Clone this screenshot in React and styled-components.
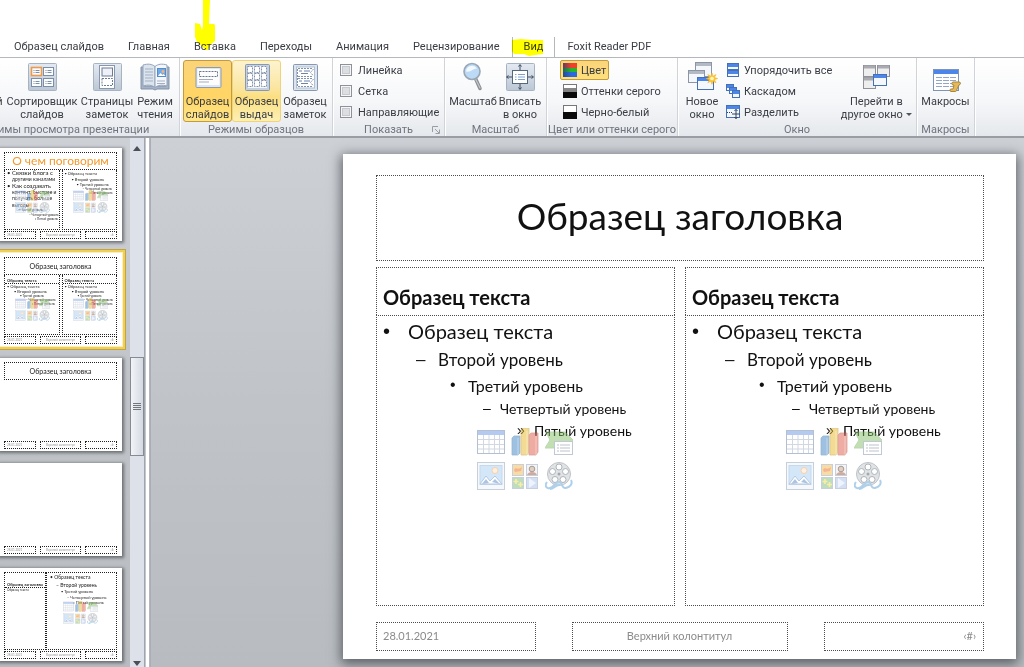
import React from "react";
import styled, { createGlobalStyle, css } from "styled-components";

const UI = `Roboto, "Noto Sans", sans-serif`;
const SLIDE = `Lato, "Open Sans", sans-serif`;

const Global = createGlobalStyle`
  *, *::before, *::after { box-sizing: border-box; }
  body { margin: 0; background: #fff; font-family: ${UI}; font-size: 11px; color: #3a3d44; }
  button { font: inherit; color: inherit; border: 0; background: none; padding: 0; margin: 0; }
  h1, h2, h3, ul, p { margin: 0; padding: 0; font-weight: normal; }
  ul { list-style: none; }
  svg { display: block; flex: none; }
`;

/* ---------- window ---------- */
const Window = styled.div`
  display: flex;
  flex-direction: column;
  height: 100vh;
  min-width: 1000px;
  overflow: hidden;
`;

const TabBar = styled.nav`
  position: relative;
  flex: none;
  display: flex;
  align-items: flex-end;
  height: 58px;
  padding-left: 2px;
  border-bottom: 1px solid #b4b7bb;
  overflow: hidden;
`;

const Tab = styled.button`
  flex: none;
  height: 20px;
  padding: 0 12px;
  line-height: 20px;
  white-space: nowrap;
  ${(p) =>
    p.$active &&
    css`
      padding: 0 11px;
      border: 1px solid #b4b7bb;
      border-width: 0 1px;
    `}
`;

const Marker = styled.svg`
  position: absolute;
  left: ${(p) => p.$x}px;
  top: ${(p) => p.$y}px;
  mix-blend-mode: multiply;
  pointer-events: none;
`;

/* ---------- ribbon ---------- */
const Ribbon = styled.div`
  flex: none;
  display: flex;
  height: 80px;
  background: linear-gradient(#ffffff, #f6f7f9 55%, #e5e8ec);
  border-bottom: 2px solid #9a9ea4;
`;

const GroupBox = styled.section`
  flex: none;
  width: ${(p) => p.$w}px;
  margin-left: ${(p) => (p.$cut ? -p.$cut : 0)}px;
  display: flex;
  flex-direction: column;
  border-right: 1px solid #d0d3d8;
  box-shadow: 1px 0 0 #fff;
`;

const GroupBody = styled.div`
  display: flex;
  align-items: flex-start;
  justify-content: ${(p) => p.$justify || "flex-start"};
  gap: ${(p) => p.$gap || 0}px;
  height: 66px;
  padding: 2px ${(p) => p.$pad ?? 3}px 0;
`;

const GroupLabel = styled.h2`
  display: flex;
  align-items: center;
  justify-content: center;
  position: relative;
  font-size: 11px;
  line-height: 12px;
  color: #70747e;
  white-space: nowrap;
`;

const Launcher = styled.button`
  position: absolute;
  right: 4px;
  top: 2px;
`;

const BigButton = styled.button`
  flex: none;
  display: flex;
  flex-direction: column;
  align-items: center;
  width: ${(p) => p.$w}px;
  height: 62px;
  line-height: 13px;
  white-space: nowrap;
  border: 1px solid transparent;
  border-radius: 3px;
  svg { margin-bottom: 2px; }
  ${(p) =>
    p.$state === "on" &&
    css`
      background: linear-gradient(#fbd47a, #ffd564 60%, #ffe68a);
      border-color: #c29b3c;
    `}
  ${(p) =>
    p.$state === "hover" &&
    css`
      background: linear-gradient(#fdf3cf, #fbe6a0 45%, #fbdf80 60%, #fdf0b4);
      border-color: #f0d27a;
    `}
`;

const Stack = styled.div`
  display: flex;
  flex-direction: column;
  align-items: flex-start;
`;

const SmallButton = styled.button`
  display: flex;
  align-items: center;
  gap: 4px;
  height: 20px;
  margin-bottom: 1px;
  padding: 0 2px;
  white-space: nowrap;
  border: 1px solid transparent;
  border-radius: 2px;
  ${(p) =>
    p.$on &&
    css`
      background: linear-gradient(#fbd47a, #ffe07c);
      border-color: #c29b3c;
    `}
`;

const CheckRow = styled.label`
  display: flex;
  align-items: center;
  gap: 6px;
  height: 20px;
  margin-bottom: 1px;
  white-space: nowrap;
`;

const Check = styled.input`
  appearance: none;
  width: 12px;
  height: 12px;
  margin: 0;
  border: 1px solid #8e9197;
  background: #dcdee1;
  box-shadow: inset 0 0 0 1px #f6f6f7, inset 0 0 0 2px #c6c9ce;
`;

const Divider = styled.div`
  width: 1px;
  height: 58px;
  margin: 0 4px 0 auto;
  background: linear-gradient(#f4f5f7, #c9ccd1 50%, #f0f1f4);
`;

const Caret = styled.span`
  display: inline-block;
  margin-left: 3px;
  vertical-align: 2px;
  border: 3px solid transparent;
  border-top-color: #50545c;
  border-bottom: 0;
`;

/* ---------- work area ---------- */
const Work = styled.div`
  flex: 1;
  min-height: 0;
  display: flex;
  background: linear-gradient(#cdd0d5, #c0c4c8 50%, #b8bcc0);
`;

const Rail = styled.aside`
  flex: none;
  width: 130px;
  padding-top: 10px;
  display: flex;
  flex-direction: column;
  gap: 12px;
  overflow: hidden;
`;

const Scroll = styled.div`
  flex: none;
  width: 15px;
  display: flex;
  flex-direction: column;
  background: #dce1ea;
  border-right: 1px solid #a0a5ad;
`;

const ScrollArrow = styled.button`
  height: ${(p) => p.$h}px;
  display: grid;
  place-items: center;
`;

const ScrollGap = styled.div`
  flex: ${(p) => p.$n};
`;

const ScrollThumb = styled.div`
  height: 99px;
  display: grid;
  place-content: center;
  gap: 1px;
  background: linear-gradient(90deg, #f2f4f7, #d4d9e2);
  border: 1px solid #858a93;
`;

const Grip = styled.i`
  width: 8px;
  height: 1px;
  background: #71757d;
`;

const Splitter = styled.div`
  flex: none;
  width: 6px;
  border: solid #a9adb4;
  border-width: 0 1px 0 0;
  background: linear-gradient(90deg, #c3c7cd 1px, #fff 1px 4px, #b4b8be 4px);
`;

const Canvas = styled.main`
  flex: 1;
  padding: 16px 8px 8px 192px;
`;

const dots = "1px dotted #4c4c4c";

const Slide = styled.article`
  display: flex;
  flex-direction: column;
  height: 505px;
  padding: 21px 32px 7px 33px;
  background: #fff;
  color: #111;
  font-family: ${SLIDE};
  box-shadow: 0 3px 11px 2px rgba(60, 65, 72, 0.75);
`;

const TitleBox = styled.h1`
  height: 86px;
  display: grid;
  place-items: center;
  padding-bottom: 6px;
  border: ${dots};
  font-size: 37px;
`;

const Columns = styled.div`
  display: grid;
  grid-template-columns: 1fr 1fr;
  gap: 10px;
  margin-top: 6px;
`;

const Heading = styled.h3`
  height: 48px;
  padding: 17px 6px 0;
  border: ${dots};
  border-bottom: 0;
  font-size: 20px;
  line-height: 24px;
  font-weight: bold;
`;

const Body = styled.div`
  position: relative;
  height: 291px;
  border: ${dots};
`;

const Level = styled.li`
  display: flex;
  align-items: center;
  height: ${(p) => p.$h}px;
  padding-left: ${(p) => p.$indent}px;
  font-size: ${(p) => p.$size}px;
  white-space: nowrap;
`;

const Bullet = styled.span`
  flex: none;
  width: ${(p) => p.$w}px;
  font-family: "Liberation Sans", sans-serif;
`;

const InsertGrid = styled.div`
  position: absolute;
  inset: 0;
  display: grid;
  grid-template-columns: repeat(3, 28px);
  place-content: center;
  gap: 6px;
  padding: 0 2px 4px 0;
  opacity: 0.5;
`;

const Footer = styled.footer`
  display: grid;
  grid-template-columns: 160fr 216fr 160fr;
  gap: 36px;
  margin-top: 16px;
`;

const FootBox = styled.p`
  height: 29px;
  padding: 0 7px 0 6px;
  border: ${dots};
  font-size: 11px;
  line-height: 25px;
  color: #8b8b8b;
  text-align: ${(p) => p.$align};
`;

/* ---------- thumbnails ---------- */
const Thumb = styled.article`
  flex: none;
  width: 124px;
  height: 93px;
  margin-left: -2px;
  padding: 4px 5px 2px 6px;
  display: flex;
  flex-direction: column;
  background: #fff;
  color: #222;
  font-family: ${SLIDE};
  box-shadow: ${(p) =>
    p.$selected
      ? "0 0 0 1px #f9efc0, 0 0 0 3px #f0cf55, 0 0 0 4px #c2a345"
      : "1px 1px 3px 1px rgba(50, 55, 62, 0.6)"};
`;

const tdash = "1px dotted #222";

const ThumbTitle = styled.h3`
  flex: none;
  height: 18px;
  border: ${tdash};
  text-align: center;
  font-size: ${(p) => (p.$big ? 12 : 7)}px;
  line-height: 16px;
  color: ${(p) => (p.$big ? "#f39a2b" : "#222")};
  white-space: nowrap;
`;

const ThumbCols = styled.div`
  flex: 1;
  min-height: 0;
  display: grid;
  grid-template-columns: ${(p) => p.$cols || "1fr 1fr"};
  gap: ${(p) => p.$gap ?? 2}px;
`;

const ThumbCell = styled.div`
  position: relative;
  min-width: 0;
  border: ${tdash};
  border-top-width: ${(p) => (p.$open ? 0 : 1)}px;
`;

const ThumbHead = styled.p`
  height: ${(p) => p.$h}px;
  display: flex;
  align-items: flex-end;
  padding-left: 2px;
  border-bottom: ${tdash};
  font-size: 4px;
  line-height: 5px;
  font-weight: bold;
  white-space: nowrap;
`;

const ThumbLine = styled.li`
  padding-left: ${(p) => p.$in}px;
  font-size: ${(p) => p.$s}px;
  line-height: ${(p) => p.$lh}px;
  white-space: nowrap;
`;

const ThumbIcons = styled.div`
  position: absolute;
  left: ${(p) => p.$x}px;
  top: ${(p) => p.$y}px;
  display: grid;
  grid-template-columns: repeat(3, 11px);
  gap: 1px;
  opacity: 0.5;
`;

const ThumbFoot = styled.footer`
  flex: none;
  display: grid;
  grid-template-columns: 32fr 40fr 32fr;
  gap: 4px;
  margin-top: ${(p) => (p.$push ? "auto" : "1px")};
`;

const ThumbFootBox = styled.p`
  height: 8px;
  padding: 0 2px;
  border: ${tdash};
  font-size: 3px;
  line-height: 6px;
  color: #999;
  text-align: ${(p) => p.$align};
`;

/* ---------- icons ---------- */
const Tile = ({ children, w = 28, h = 28 }) => (
  <svg width="32" height="32" viewBox="0 0 32 32" fill="none">
    <defs>
      <linearGradient id="tile" x1="0" y1="0" x2="0" y2="1">
        <stop offset="0" stopColor="#e4eaf2" />
        <stop offset="1" stopColor="#bcc7d5" />
      </linearGradient>
    </defs>
    <rect x={(32 - w) / 2 + 0.5} y={(32 - h) / 2 + 0.5} width={w} height={h - 1} rx="1" fill="url(#tile)" stroke="#a8b3c2" />
    {children}
  </svg>
);

const MiniSlide = ({ x, y, hot }) => (
  <g>
    <rect x={x} y={y} width="10" height="8" fill="#fbfcfe" stroke={hot ? "#ee9a48" : "#7b8da7"} strokeWidth={hot ? 1.6 : 1} />
    <path d={`M${x + 2} ${y + 3}h1M${x + 4} ${y + 3}h4M${x + 2} ${y + 5}h1M${x + 4} ${y + 5}h4`} stroke="#7c8ea8" />
  </g>
);

const SorterIcon = () => (
  <Tile>
    <MiniSlide x={5.5} y={6.5} hot />
    <MiniSlide x={17.5} y={6.5} />
    <MiniSlide x={5.5} y={17.5} />
    <MiniSlide x={17.5} y={17.5} />
  </Tile>
);

const NotesPageIcon = () => (
  <Tile>
    <rect x="8.500" y="4.500" width="15" height="23" fill="#fff" stroke="#8796ac" />
    <rect x="11" y="7" width="10.500" height="8" fill="#eef2f8" stroke="#6b7b93" />
    <path d="M11 17.500h10.500v7h-10.500z" stroke="#6b7b93" strokeDasharray="2 1" />
  </Tile>
);

const ReadIcon = () => (
  <svg width="32" height="32" viewBox="0 0 32 32" fill="none">
    <path d="M2 6h3v19h22v-19h3v22h-12l-2 1-2-1h-12z" fill="#a5b3c6" stroke="#8394aa" />
    <path d="M4 4c5-1.500 9-1 12 1.500v21c-3-2.500-7-3-12-1.500z" fill="#dce4ee" stroke="#94a4ba" />
    <path d="M28 4c-5-1.500-9-1-12 1.500v21c3-2.500 7-3 12-1.500z" fill="#f3f6fa" stroke="#94a4ba" />
    <path d="M6 8h8M6 11h8M6 14h8M6 17h8M6 20h8M18 20h8M18 22.500h8" stroke="#a3b1c5" />
    <rect x="18.500" y="7.500" width="8" height="8" fill="#6fabec" stroke="#5a8ac4" />
    <circle cx="24" cy="10.500" r="1.500" fill="#f7b36b" />
    <path d="M19 15l2.500-3 2 2 1-1 2 2z" fill="#fff" />
  </svg>
);

const SlideMasterIcon = () => (
  <svg width="32" height="32" viewBox="0 0 32 32" fill="none">
    <rect x="4" y="6.500" width="25" height="20" rx="1" fill="#dfe6ef" stroke="#8b9bb3" />
    <rect x="5.500" y="8" width="22" height="16" fill="#fdfdfe" />
    <rect x="7.500" y="10.500" width="18" height="5" stroke="#66768f" strokeDasharray="2 1" />
    <path d="M7 18.500h14M7 21h10" stroke="#a3aebf" />
  </svg>
);

const HandoutIcon = () => (
  <svg width="32" height="32" viewBox="0 0 32 32" fill="none">
    <rect x="4.500" y="3.500" width="24" height="26" rx="1" fill="#c5d1e0" stroke="#8798b0" />
    <rect x="7" y="5" width="19" height="22" fill="#f4f7fb" />
    {[5.5, 12.5, 19.5].map((y) =>
      [6.5, 13.5, 20.5].map((x) => (
        <rect key={x + "-" + y} x={x} y={y} width="5" height="6" fill="#fff" stroke="#8291a8" strokeDasharray="2 1" />
      ))
    )}
  </svg>
);

const NotesMasterIcon = () => (
  <svg width="32" height="32" viewBox="0 0 32 32" fill="none">
    <rect x="4.500" y="3.500" width="24" height="26" rx="1" fill="#dbe4ef" stroke="#8798b0" />
    <rect x="7.500" y="6" width="18" height="21" fill="#fff" stroke="#b3bfcf" />
    <path d="M9 7.500h15M9 15.500h15M9 17.500h15M9 25.500h15" stroke="#8094b2" strokeDasharray="2 1" />
    <path d="M10 10h3M15 10h6M12 12.500h7M10 20h3M15 20h6M12 22.500h7" stroke="#6c84a8" />
    <path d="M24.500 8l-3 3.500 3 3.500M24.500 18l-3 3.500 3 3.500M8.500 8v18" stroke="#7f93b1" strokeDasharray="2 1" />
  </svg>
);

const NormalIcon = () => (
  <Tile>
    <MiniSlide x={5.5} y={6.5} />
    <MiniSlide x={17.5} y={17.5} />
  </Tile>
);

const ZoomIcon = () => (
  <svg width="32" height="32" viewBox="0 0 32 32" fill="none">
    <path d="M18.500 17.500l4.500 10" stroke="#8a8e94" strokeWidth="3.500" strokeLinecap="round" />
    <path d="M18.500 18l4.500 9" stroke="#c4c8cc" strokeWidth="1.200" strokeLinecap="round" />
    <circle cx="15" cy="10.500" r="8" fill="#bcdaf6" stroke="#9aa6b5" strokeWidth="1.600" />
    <path d="M9 10.500a6 6 0 0 1 11-3c-4 0-6 4-11 3z" fill="#f2f9ff" />
  </svg>
);

const FitIcon = () => (
  <Tile>
    <rect x="8.500" y="9.500" width="15" height="13" fill="#fff" stroke="#55677f" />
    <path d="M11 13.500h1.500M14 13.500h7M11 16h1.500M14 16h7M11 18.500h1.500M14 18.500h7" stroke="#7fa0cf" />
    <path d="M16 9v-5M14.500 5.500l1.500-2 1.500 2M16 23v5M14.500 26.500l1.500 2 1.500-2M8 16h-5M4.500 14.500l-2 1.500 2 1.500M24 16h5M27.500 14.500l2 1.500-2 1.500" stroke="#3d4c61" />
  </Tile>
);

const ColorIcon = () => (
  <svg width="14" height="14" viewBox="0 0 14 14">
    <defs>
      <linearGradient id="shade" x1="0" x2="1">
        <stop offset="0" stopColor="#1d3f74" stopOpacity="0.700" />
        <stop offset="0.600" stopColor="#1d3f74" stopOpacity="0" />
      </linearGradient>
    </defs>
    <rect x="0" y="0" width="14" height="5" fill="#f0402a" />
    <rect x="0" y="5" width="14" height="4" fill="#25b52c" />
    <rect x="0" y="9" width="14" height="5" fill="#2c68e0" />
    <rect x="0" y="0" width="14" height="14" fill="url(#shade)" />
  </svg>
);

const GrayIcon = () => (
  <svg width="14" height="14" viewBox="0 0 14 14">
    <rect x="0.500" y="0.500" width="13" height="13" fill="#fff" stroke="#777" />
    <rect x="1" y="4" width="12" height="4" fill="#858585" />
    <rect x="0" y="8" width="14" height="6" fill="#0a0a0a" />
  </svg>
);

const BwIcon = () => (
  <svg width="14" height="14" viewBox="0 0 14 14">
    <rect x="0.500" y="0.500" width="13" height="13" fill="#fff" stroke="#777" />
    <rect x="0" y="7" width="14" height="7" fill="#0a0a0a" />
  </svg>
);

const Win = ({ x, y, w, h, blue }) => (
  <g>
    <rect x={x + 0.5} y={y + 0.5} width={w - 1} height={h - 1} fill="#f4f7fc" stroke={blue ? "#4670b5" : "#8c95a4"} />
    <rect x={x + 1} y={y + 1} width={w - 2} height="3" fill={blue ? "#4c86e8" : "#b4bac5"} />
  </g>
);

const NewWindowIcon = () => (
  <svg width="32" height="32" viewBox="0 0 32 32">
    <Win x={9} y={1} w={17} h={15} />
    <Win x={2} y={9} w={17} h={13} />
    <Win x={11} y={16} w={17} h={13} blue />
    <path d="M26 12l1 3.200 3-1.700-1.500 3 3.200 1-3.200 1.200 1.500 3-3-1.500-1 3.200-1.200-3.200-3 1.500 1.500-3-3.200-1.200 3.200-1-1.500-3 3 1.700z" fill="#ffc832" stroke="#f0ad22" strokeWidth="0.500" />
    <circle cx="26" cy="17.500" r="1.800" fill="#fff6c4" />
  </svg>
);

const ArrangeIcon = () => (
  <svg width="14" height="14" viewBox="0 0 14 14">
    <Win x={1} y={0} w={12} h={7} blue />
    <Win x={1} y={7} w={12} h={7} blue />
  </svg>
);

const CascadeIcon = () => (
  <svg width="14" height="14" viewBox="0 0 14 14">
    <Win x={0} y={0} w={8} h={7} blue />
    <Win x={3} y={3} w={8} h={7} blue />
    <Win x={6} y={6} w={8} h={8} blue />
  </svg>
);

const SplitIcon = () => (
  <svg width="14" height="14" viewBox="0 0 14 14" fill="none">
    <Win x={0} y={0} w={14} h={13} blue />
    <path d="M1 7.500h6" stroke="#33445e" strokeDasharray="1 1" />
    <path d="M10 4.500v9M8.500 6l1.500-1.700 1.500 1.700M8.500 12l1.500 1.700 1.500-1.700M6 9h8" stroke="#33445e" />
  </svg>
);

const SwitchIcon = () => (
  <svg width="32" height="32" viewBox="0 0 32 32">
    {[[3, 4], [17, 4], [3, 16]].map(([x, y]) => (
      <g key={x + "-" + y}>
        <rect x={x + 0.5} y={y + 0.5} width="12" height="11" fill="#eeeeef" stroke="#909297" />
        <path d={`M${x + 1} ${y + 2}h11`} stroke="#a9abb0" strokeWidth="3" />
      </g>
    ))}
    <Win x={13} y={13} w={14} h={12} blue />
  </svg>
);

const MacroIcon = () => (
  <svg width="32" height="32" viewBox="0 0 32 32" fill="none">
    <rect x="3.500" y="8.500" width="25" height="21" fill="#fff" stroke="#7d93b7" />
    <rect x="4" y="9" width="24" height="4" fill="#4c86e8" />
    <path d="M6 16.500h20M6 19.500h20M6 22.500h20M6 25.500h20" stroke="#92a7c8" />
    <path d="M12.500 14v14M19.500 14v14" stroke="#fff" />
    <path d="M23 21h6c2 0 2 2.500 0 3l-2 4c0 2-1 2.500-2 2.500h-4c-1.500 0-1.500-2.500 0-2.500h2l1-4h-1c-1.500 0-1.500-3 0-3z" fill="#e3b95a" stroke="#a8863a" />
  </svg>
);

const InsertIcon = ({ kind, size }) => (
  <svg width={size} height={size} viewBox="0 0 28 28" fill="none">
    {kind === "table" && (
      <g>
        <rect x="0.500" y="2.500" width="27" height="23" fill="#fff" stroke="#6d81a6" />
        <rect x="1" y="3" width="26" height="4" fill="#6c96e2" />
        <path d="M1 11.500h26M1 16.500h26M1 21h26M6.500 7v18M12 7v18M17.500 7v18M22.500 7v18" stroke="#a5b2c6" />
      </g>
    )}
    {kind === "chart" && (
      <g strokeWidth="0.800">
        <path d="M1 10l2-2h6v17l-2 2h-6z" fill="#3f83c4" stroke="#356fa8" />
        <path d="M10 3l2-3h6v24l-2 3h-6z" fill="#e8b92a" stroke="#b89021" />
        <path d="M18 7l2-2h7v19l-2 3h-7z" fill="#df5c48" stroke="#b84939" />
        <path d="M7 10v17M16 3v24M25 7v20" stroke="#fff" strokeOpacity="0.500" />
      </g>
    )}
    {kind === "art" && (
      <g>
        <path d="M1 4h19l8 8-5 8h-23l5-8z" fill="#86c06a" stroke="#79b25f" />
        <rect x="9.500" y="13.500" width="18" height="13" fill="#fff" stroke="#8593a8" />
        <path d="M12 17h2M15 17h10M12 20h2M15 20h10M12 23h2M15 23h10" stroke="#7a8798" />
      </g>
    )}
    {kind === "picture" && (
      <g>
        <rect x="0.500" y="0.500" width="27" height="27" fill="#eef3f8" stroke="#8fa2b8" />
        <rect x="3" y="3.500" width="22" height="19" fill="#a9d0f5" stroke="#8db4de" />
        <circle cx="18" cy="8.500" r="3" fill="#ffe3c0" stroke="#f0a25a" />
        <path d="M3 22l6-8 4 5 5-5 7 8z" fill="#fff" stroke="#6b95cc" />
        <path d="M5 22l4-5 3 4M15 20l3-3 5 5z" fill="#5b88c6" />
      </g>
    )}
    {kind === "clip" && (
      <g>
        <rect x="1.500" y="2.500" width="11" height="11" fill="#f4bb45" stroke="#8fa0b8" />
        <path d="M3 8c2-4 4 1 8-3l-1 4-6 1z" fill="#ec6b2e" />
        <rect x="15.500" y="2.500" width="11" height="11" fill="#ecebe8" stroke="#8fa0b8" />
        <circle cx="21" cy="7" r="2.800" fill="#c9a184" stroke="#4b3a30" />
        <path d="M16 13c1-4 9-4 10 0z" fill="#a0583f" />
        <rect x="1.500" y="15.500" width="11" height="11" fill="#7fbc7d" stroke="#8fa0b8" />
        <path d="M5 17v5M2.500 19.500h5M9.500 20v5M7 22.500h5" stroke="#f5e04a" strokeWidth="1.600" />
        <rect x="15.500" y="15.500" width="11" height="11" fill="#a9c0ea" stroke="#8fa0b8" />
        <path d="M18 16l7 5-7 5z" fill="#dfe9fb" />
      </g>
    )}
    {kind === "media" && (
      <g>
        <circle cx="14" cy="12" r="11.500" fill="#c3c8ce" stroke="#7e868f" />
        {[[14, 5], [7.5, 9.5], [10, 17.5], [18, 17.5], [20.5, 9.5]].map(([x, y]) => (
          <circle key={x} cx={x} cy={y} r="3" fill="#fff" stroke="#5f6973" />
        ))}
        <circle cx="14" cy="12" r="1.500" fill="#4d5660" />
        <path d="M2 20c-3 4 0 7 3 6 4-1 5-6 9-6 4 0 2 7 7 6 4-1 7-4 5-8M5 27c4 0 6-5 10-4" stroke="#5fa3d6" strokeWidth="2" />
      </g>
    )}
  </svg>
);

const kinds = ["table", "chart", "art", "picture", "clip", "media"];

/* ---------- pieces ---------- */
const Group = ({ label, w, cut, pad, gap, justify, launcher, children }) => (
  <GroupBox $w={w} $cut={cut}>
    <GroupBody $pad={pad} $gap={gap} $justify={justify}>{children}</GroupBody>
    <GroupLabel>
      {label}
      {launcher && (
        <Launcher aria-label="Параметры сетки">
          <svg width="8" height="8" viewBox="0 0 8 8" fill="none" stroke="#9a9da5">
            <path d="M0.500 6v-5.500h5.500M3 3l4 4M7.500 3.500v4h-4" />
          </svg>
        </Launcher>
      )}
    </GroupLabel>
  </GroupBox>
);

const Big = ({ icon, lines, w, state, caret }) => (
  <BigButton $w={w} $state={state}>
    {icon}
    {lines.map((t, i) => (
      <span key={t}>
        {t}
        {caret && i === lines.length - 1 && <Caret />}
      </span>
    ))}
  </BigButton>
);

const levels = [
  ["•", "Образец текста", 20, 30, 6, 25],
  ["–", "Второй уровень", 17, 27, 39, 22],
  ["•", "Третий уровень", 16, 24, 73, 18],
  ["–", "Четвертый уровень", 14, 22, 106, 17],
  ["»", "Пятый уровень", 14, 22, 140, 17],
];

const Column = () => (
  <section>
    <Heading>Образец текста</Heading>
    <Body>
      <ul>
        {levels.map(([mark, text, size, h, indent, bw]) => (
          <Level key={text} $size={size} $h={h} $indent={indent}>
            <Bullet $w={bw}>{mark}</Bullet>
            {text}
          </Level>
        ))}
      </ul>
      <InsertGrid>
        {kinds.map((k) => <InsertIcon key={k} kind={k} size={28} />)}
      </InsertGrid>
    </Body>
  </section>
);

const MiniLevels = ({ rows }) => (
  <ul>
    {rows.map(([text, s, lh, indent], i) => (
      <ThumbLine key={i} $s={s} $lh={lh} $in={indent}>{text}</ThumbLine>
    ))}
  </ul>
);

const MiniIcons = ({ x, y }) => (
  <ThumbIcons $x={x} $y={y}>
    {kinds.map((k) => <InsertIcon key={k} kind={k} size={11} />)}
  </ThumbIcons>
);

const MiniFooter = ({ push }) => (
  <ThumbFoot $push={push}>
    <ThumbFootBox $align="left">28.01.2021</ThumbFootBox>
    <ThumbFootBox $align="center">Верхний колонтитул</ThumbFootBox>
    <ThumbFootBox $align="right">‹#›</ThumbFootBox>
  </ThumbFoot>
);

const short = [
  ["• Образец текста", 4, 5, 2],
  ["• Второй уровень", 4, 5, 9],
  ["• Третий уровень", 3, 4, 15],
  ["– Четвертый уровень", 3, 4, 21],
  ["» Пятый уровень", 3, 4, 27],
];

const wide = [
  ["•  Образец текста", 5, 8, 3],
  ["–  Второй уровень", 5, 8, 9],
  ["•  Третий уровень", 4, 6, 14],
  ["–  Четвертый уровень", 4, 5, 20],
  ["»  Пятый уровень", 4, 5, 26],
];

const topics = [
  ["•  Связки блога с", 6, 6, 2],
  ["другими каналами", 5, 7, 7],
  ["•  Как создавать", 6, 6, 2],
  ["контент, быстрее и", 5, 6, 7],
  ["получать больше", 5, 7, 7],
  ["выгоды", 5, 6, 7],
  ["• Третий уровень", 3, 5, 14],
  ["– Четвертый уровень", 3, 4, 24],
  ["» Пятый уровень", 3, 4, 30],
];

const right = [
  ["•  Образец текста", 4, 7, 2],
  ["•  Второй уровень", 4, 5, 9],
  ["•  Третий уровень", 4, 5, 14],
  ["–  Четвертый уровень", 3, 4, 20],
  ["»  Пятый уровень", 3, 4, 27],
];

const tabs = [
  "Образец слайдов", "Главная", "Вставка", "Переходы",
  "Анимация", "Рецензирование", "Вид", "Foxit Reader PDF",
];

export default function App() {
  return (
    <Window>
      <Global />
      <TabBar>
        {tabs.map((t) => (
          <Tab key={t} $active={t === "Вид"}>{t}</Tab>
        ))}
        <Marker $x={194} $y={0} width="22" height="51" viewBox="0 0 22 51">
          <path d="M9 0h7l-1 24 5 0 1 1v16l-5 4-2 5h-3l-3-4-5-4-2-5v-14l5 1 2 6 1-4z" fill="#ffff00" />
        </Marker>
        <Marker $x={512} $y={38} width="32" height="19" viewBox="0 0 32 19">
          <path d="M0 2l9-1 11 1h11v14l-8 1-6 1-5-2-10 0-2-3z" fill="#ffff00" />
        </Marker>
      </TabBar>

      <Ribbon>
        <Group label="Режимы просмотра презентации" w={233} cut={53} justify="flex-end">
          <Big w={52} icon={<NormalIcon />} lines={["Обычный"]} />
          <Big w={76} icon={<SorterIcon />} lines={["Сортировщик", "слайдов"]} />
          <Big w={54} icon={<NotesPageIcon />} lines={["Страницы", "заметок"]} />
          <Big w={42} icon={<ReadIcon />} lines={["Режим", "чтения"]} />
        </Group>
        <Group label="Режимы образцов" w={153}>
          <Big w={49} state="on" icon={<SlideMasterIcon />} lines={["Образец", "слайдов"]} />
          <Big w={49} state="hover" icon={<HandoutIcon />} lines={["Образец", "выдач"]} />
          <Big w={48} icon={<NotesMasterIcon />} lines={["Образец", "заметок"]} />
        </Group>
        <Group label="Показать" w={112} pad={7} launcher>
          <Stack>
            {["Линейка", "Сетка", "Направляющие"].map((t) => (
              <CheckRow key={t}>
                <Check type="checkbox" />
                {t}
              </CheckRow>
            ))}
          </Stack>
        </Group>
        <Group label="Масштаб" w={102}>
          <Big w={50} icon={<ZoomIcon />} lines={["Масштаб"]} />
          <Big w={44} icon={<FitIcon />} lines={["Вписать", "в окно"]} />
        </Group>
        <Group label="Цвет или оттенки серого" w={131} pad={13}>
          <Stack>
            <SmallButton $on><ColorIcon />Цвет</SmallButton>
            <SmallButton><GrayIcon />Оттенки серого</SmallButton>
            <SmallButton><BwIcon />Черно-белый</SmallButton>
          </Stack>
        </Group>
        <Group label="Окно" w={239}>
          <Big w={42} icon={<NewWindowIcon />} lines={["Новое", "окно"]} />
          <Stack>
            <SmallButton><ArrangeIcon />Упорядочить все</SmallButton>
            <SmallButton><CascadeIcon />Каскадом</SmallButton>
            <SmallButton><SplitIcon />Разделить</SmallButton>
          </Stack>
          <Divider />
          <Big w={74} icon={<SwitchIcon />} lines={["Перейти в", "другое окно"]} caret />
        </Group>
        <Group label="Макросы" w={58}>
          <Big w={51} icon={<MacroIcon />} lines={["Макросы"]} />
        </Group>
      </Ribbon>

      <Work>
        <Rail>
          <Thumb>
            <ThumbTitle $big>О чем поговорим</ThumbTitle>
            <ThumbCols>
              <ThumbCell $open>
                <MiniLevels rows={topics} />
                <MiniIcons x={10} y={20} />
              </ThumbCell>
              <ThumbCell $open>
                <MiniLevels rows={right} />
                <MiniIcons x={10} y={20} />
              </ThumbCell>
            </ThumbCols>
            <MiniFooter />
          </Thumb>
          <Thumb $selected>
            <ThumbTitle>Образец заголовка</ThumbTitle>
            <ThumbCols>
              {[0, 1].map((i) => (
                <ThumbCell key={i} $open>
                  <ThumbHead $h={9}>Образец текста</ThumbHead>
                  <MiniLevels rows={short} />
                  <MiniIcons x={10} y={23} />
                </ThumbCell>
              ))}
            </ThumbCols>
            <MiniFooter />
          </Thumb>
          <Thumb>
            <ThumbTitle>Образец заголовка</ThumbTitle>
            <MiniFooter push />
          </Thumb>
          <Thumb>
            <MiniFooter push />
          </Thumb>
          <Thumb>
            <ThumbCols $cols="42fr 71fr" $gap={0}>
              <ThumbCell>
                <ThumbHead $h={15}>Образец заголовка</ThumbHead>
                <MiniLevels rows={[["Образец текста", 3, 4, 2]]} />
              </ThumbCell>
              <ThumbCell>
                <MiniLevels rows={wide} />
                <MiniIcons x={16} y={28} />
              </ThumbCell>
            </ThumbCols>
            <MiniFooter />
          </Thumb>
        </Rail>
        <Scroll>
          <ScrollArrow $h={20} aria-label="Вверх">
            <svg width="8" height="5" viewBox="0 0 8 5"><path d="M4 0l4 5h-8z" fill="#4b4f57" /></svg>
          </ScrollArrow>
          <ScrollGap $n={199} />
          <ScrollThumb><Grip /><Grip /><Grip /><Grip /></ScrollThumb>
          <ScrollGap $n={203} />
          <ScrollArrow $h={8} aria-label="Вниз">
            <svg width="8" height="5" viewBox="0 0 8 5"><path d="M4 5l4-5h-8z" fill="#4b4f57" /></svg>
          </ScrollArrow>
        </Scroll>
        <Splitter />
        <Canvas>
          <Slide>
            <TitleBox>Образец заголовка</TitleBox>
            <Columns>
              <Column />
              <Column />
            </Columns>
            <Footer>
              <FootBox $align="left">28.01.2021</FootBox>
              <FootBox $align="center">Верхний колонтитул</FootBox>
              <FootBox $align="right">‹#›</FootBox>
            </Footer>
          </Slide>
        </Canvas>
      </Work>
    </Window>
  );
}
